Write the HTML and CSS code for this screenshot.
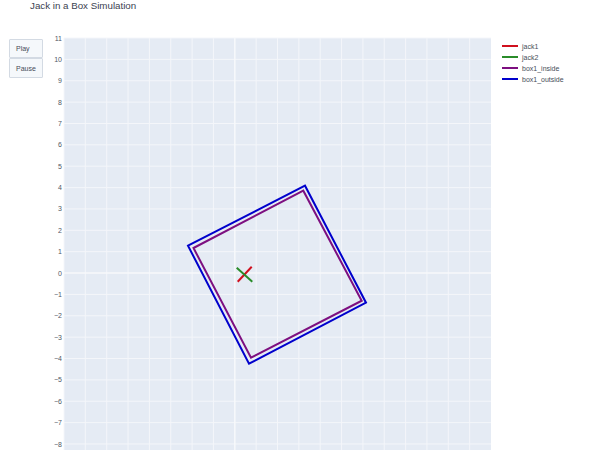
FILE: index.html
```html
<!DOCTYPE html>
<html>
<head>
<meta charset="utf-8">
<link rel="stylesheet" href="styles.css">
</head>
<body>
<div class="page">
  <div class="title">Jack in a Box Simulation</div>
  <div class="main">
    <div class="controls">
      <button class="btn">Play</button>
      <button class="btn">Pause</button>
    </div>
    <svg class="chart" width="447" height="420" viewBox="0 0 447 420">
      <rect class="plotbg" x="20" y="8" width="427" height="412"/>
      <g class="grid">
        <line x1="20" y1="8" x2="20" y2="420"/>
        <line x1="41.35" y1="8" x2="41.35" y2="420"/>
        <line x1="62.7" y1="8" x2="62.7" y2="420"/>
        <line x1="84.05" y1="8" x2="84.05" y2="420"/>
        <line x1="105.4" y1="8" x2="105.4" y2="420"/>
        <line x1="126.75" y1="8" x2="126.75" y2="420"/>
        <line x1="148.1" y1="8" x2="148.1" y2="420"/>
        <line x1="169.45" y1="8" x2="169.45" y2="420"/>
        <line x1="212.15" y1="8" x2="212.15" y2="420"/>
        <line x1="233.5" y1="8" x2="233.5" y2="420"/>
        <line x1="254.85" y1="8" x2="254.85" y2="420"/>
        <line x1="276.2" y1="8" x2="276.2" y2="420"/>
        <line x1="297.55" y1="8" x2="297.55" y2="420"/>
        <line x1="318.9" y1="8" x2="318.9" y2="420"/>
        <line x1="340.25" y1="8" x2="340.25" y2="420"/>
        <line x1="361.6" y1="8" x2="361.6" y2="420"/>
        <line x1="382.95" y1="8" x2="382.95" y2="420"/>
        <line x1="404.3" y1="8" x2="404.3" y2="420"/>
        <line x1="425.65" y1="8" x2="425.65" y2="420"/>
        <line x1="20" y1="8" x2="447" y2="8"/>
        <line x1="20" y1="29.37" x2="447" y2="29.37"/>
        <line x1="20" y1="50.74" x2="447" y2="50.74"/>
        <line x1="20" y1="72.1" x2="447" y2="72.1"/>
        <line x1="20" y1="93.47" x2="447" y2="93.47"/>
        <line x1="20" y1="114.84" x2="447" y2="114.84"/>
        <line x1="20" y1="136.21" x2="447" y2="136.21"/>
        <line x1="20" y1="157.58" x2="447" y2="157.58"/>
        <line x1="20" y1="178.94" x2="447" y2="178.94"/>
        <line x1="20" y1="200.31" x2="447" y2="200.31"/>
        <line x1="20" y1="221.68" x2="447" y2="221.68"/>
        <line x1="20" y1="264.42" x2="447" y2="264.42"/>
        <line x1="20" y1="285.78" x2="447" y2="285.78"/>
        <line x1="20" y1="307.15" x2="447" y2="307.15"/>
        <line x1="20" y1="328.52" x2="447" y2="328.52"/>
        <line x1="20" y1="349.89" x2="447" y2="349.89"/>
        <line x1="20" y1="371.26" x2="447" y2="371.26"/>
        <line x1="20" y1="392.62" x2="447" y2="392.62"/>
        <line x1="20" y1="414" x2="447" y2="414"/>
      </g>
      <g class="zero">
        <line x1="190.8" y1="8" x2="190.8" y2="420"/>
        <line x1="20" y1="243.05" x2="447" y2="243.05"/>
      </g>
      <g class="ticks">
        <text x="18" y="8">11</text>
        <text x="18" y="29.37">10</text>
        <text x="18" y="50.74">9</text>
        <text x="18" y="72.1">8</text>
        <text x="18" y="93.47">7</text>
        <text x="18" y="114.84">6</text>
        <text x="18" y="136.21">5</text>
        <text x="18" y="157.58">4</text>
        <text x="18" y="178.94">3</text>
        <text x="18" y="200.31">2</text>
        <text x="18" y="221.68">1</text>
        <text x="18" y="243.05">0</text>
        <text x="18" y="264.42">−1</text>
        <text x="18" y="285.78">−2</text>
        <text x="18" y="307.15">−3</text>
        <text x="18" y="328.52">−4</text>
        <text x="18" y="349.89">−5</text>
        <text x="18" y="371.26">−6</text>
        <text x="18" y="392.62">−7</text>
        <text x="18" y="414">−8</text>
      </g>
      <polygon class="box-out" points="144,215.7 261,155.7 322,272.7 205,333.7"/>
      <polygon class="box-in" points="149.5,218 259.3,160.7 317.7,270.7 207,327.7"/>
      <line class="jack1" x1="193.7" y1="251.7" x2="207.7" y2="236.7"/>
      <line class="jack2" x1="192.7" y1="237.7" x2="208.3" y2="251.7"/>
    </svg>
    <div class="legend">
      <div class="item"><span class="swatch sw-jack1"></span>jack1</div>
      <div class="item"><span class="swatch sw-jack2"></span>jack2</div>
      <div class="item"><span class="swatch sw-in"></span>box1_inside</div>
      <div class="item"><span class="swatch sw-out"></span>box1_outside</div>
    </div>
  </div>
</div>
</body>
</html>
```

FILE: styles.css
```css
html, body {
  margin: 0;
  padding: 0;
  background: #ffffff;
}
body {
  width: 596px;
  height: 450px;
  overflow: hidden;
  font-family: "Liberation Sans", Arial, sans-serif;
}
.page {
  display: flex;
  flex-direction: column;
}
.title {
  height: 30px;
  padding-left: 30px;
  font-size: 9.75px;
  line-height: 12px;
  color: #3b4250;
}
.main {
  display: flex;
  align-items: flex-start;
}
.controls {
  width: 35px;
  padding: 9px 0 0 9px;
  display: flex;
  flex-direction: column;
}
.btn {
  width: 34px;
  height: 19px;
  margin: 0;
  padding: 0 0 0 6px;
  text-align: left;
  background: #f5f8fb;
  border: 1px solid #d3dae3;
  border-radius: 1px;
  font-family: "Liberation Sans", Arial, sans-serif;
  font-size: 7px;
  color: #454c58;
}
.btn + .btn {
  height: 20px;
}
.chart {
  display: block;
  flex: none;
}
.plotbg {
  fill: #e5ebf4;
}
.grid line {
  stroke: #f4f6fa;
  stroke-width: 1;
}
.zero line {
  stroke: #f7f9fb;
  stroke-width: 1.5;
}
.ticks text {
  font-family: "Liberation Sans", Arial, sans-serif;
  font-size: 7px;
  fill: #505866;
  text-anchor: end;
  dominant-baseline: central;
}
.box-out {
  fill: none;
  stroke: #0000cc;
  stroke-width: 2;
}
.box-in {
  fill: none;
  stroke: #7d0f80;
  stroke-width: 2;
}
.jack1 {
  stroke: #d0101e;
  stroke-width: 2;
}
.jack2 {
  stroke: #2a8c2a;
  stroke-width: 2;
}
.legend {
  padding: 10.5px 0 0 11px;
  display: flex;
  flex-direction: column;
}
.item {
  display: flex;
  align-items: center;
  gap: 4px;
  height: 11px;
  font-size: 7px;
  color: #454c58;
}
.swatch {
  width: 16px;
  height: 2px;
}
.sw-jack1 { background: #d0101e; }
.sw-jack2 { background: #2a8c2a; }
.sw-in { background: #7d0f80; }
.sw-out { background: #0000cc; }
```
